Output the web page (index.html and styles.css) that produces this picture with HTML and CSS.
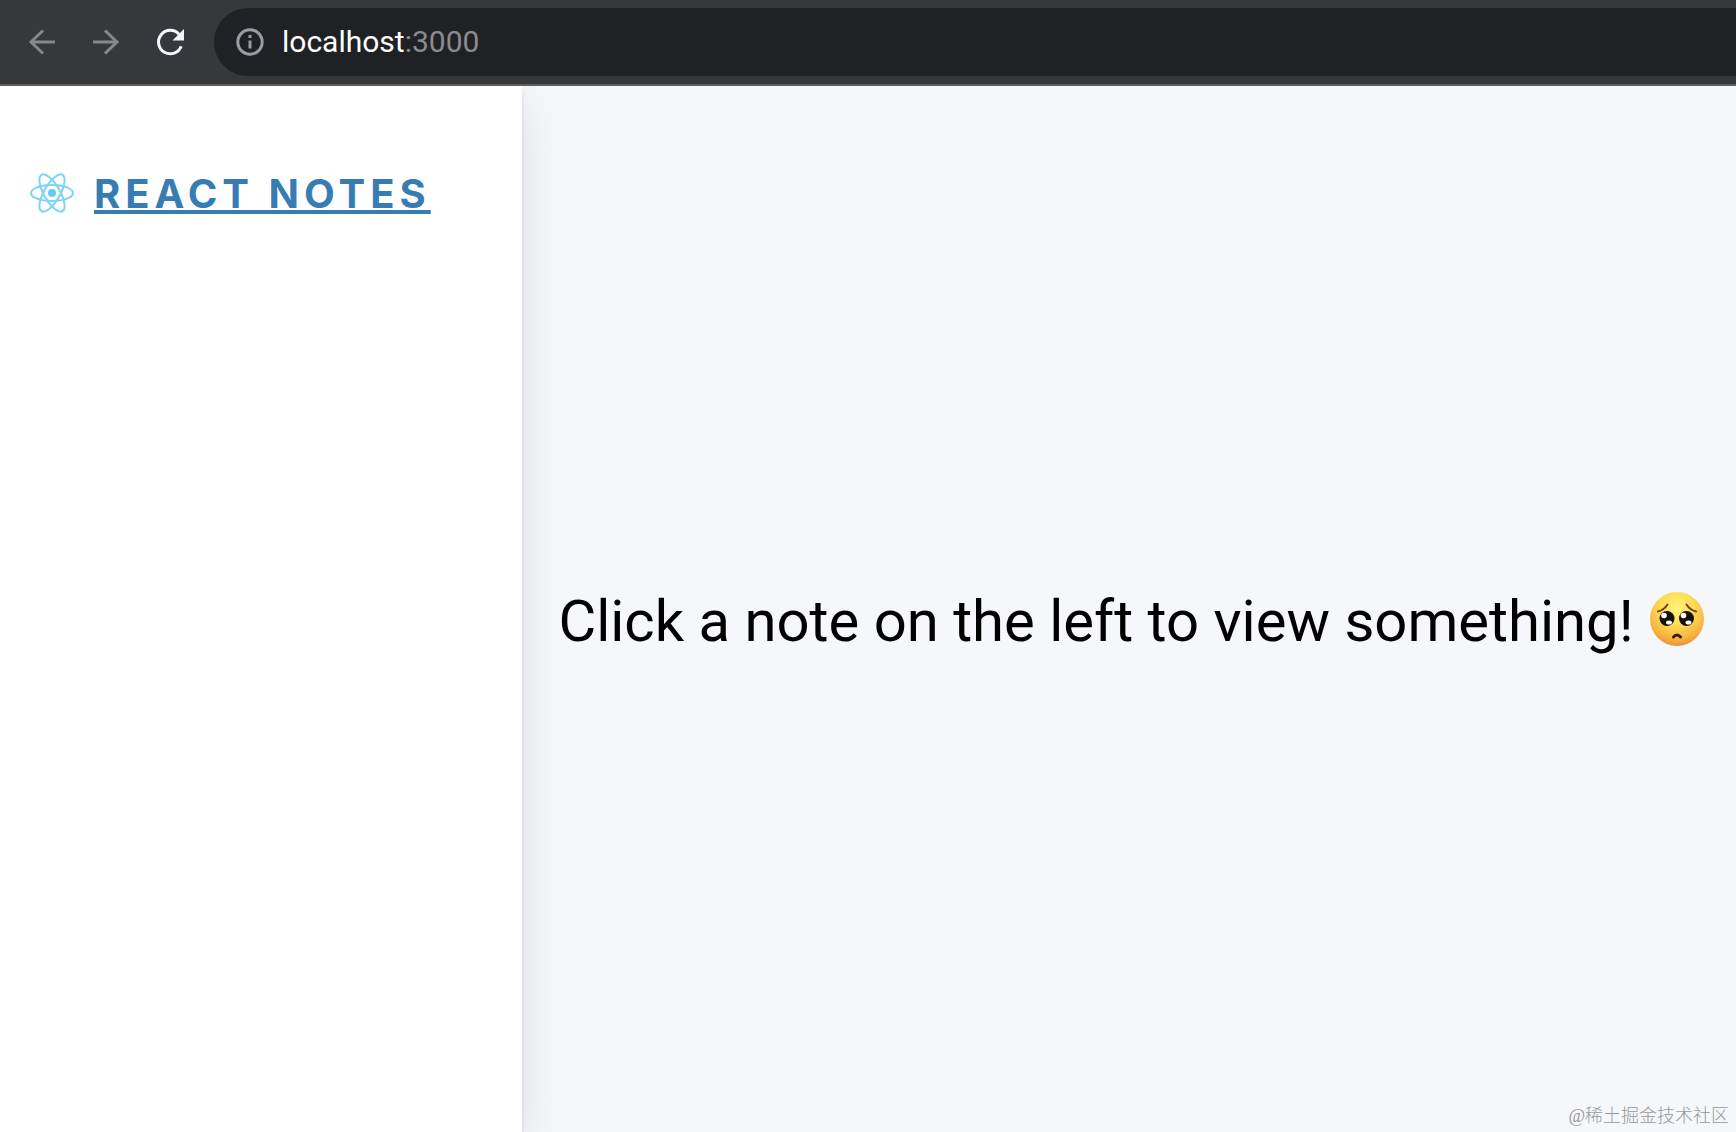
FILE: index.html
```html
<!DOCTYPE html>
<html lang="en">
<head>
<meta charset="utf-8">
<meta name="viewport" content="width=device-width, initial-scale=1">
<title>React Notes</title>
<link rel="stylesheet" href="styles.css">
</head>
<body>
<header class="toolbar">
  <nav class="nav-buttons" aria-label="Browser navigation">
    <button class="nav-button" type="button" aria-label="Back">
      <svg viewBox="0 0 32 32"><path d="M29 16H5M17 4.500L5 16l12 11.500"/></svg>
    </button>
    <button class="nav-button" type="button" aria-label="Forward">
      <svg viewBox="0 0 32 32"><path d="M3 16h24M15 4.500L27 16 15 27.500"/></svg>
    </button>
    <button class="nav-button nav-button-active" type="button" aria-label="Reload">
      <svg viewBox="0 0 32 32"><path d="M27.200 20.200A11.700 11.700 0 1 1 25 8.300"/><path class="solid" d="M30 3v11.500H18.500z"/></svg>
    </button>
  </nav>
  <div class="address">
    <svg class="info" viewBox="0 0 28 28" aria-hidden="true"><circle cx="14" cy="14" r="12.200"/><path d="M14 12.500v8M14 7v3"/></svg>
    <span class="url">localhost<span class="port">:3000</span></span>
  </div>
</header>
<div class="app">
  <aside class="sidebar">
    <svg class="logo" viewBox="0 0 44 40" aria-hidden="true">
      <circle class="core" cx="22" cy="20" r="4"/>
      <ellipse cx="22" cy="20" rx="21" ry="8"/>
      <ellipse cx="22" cy="20" rx="21" ry="8" transform="rotate(60 22 20)"/>
      <ellipse cx="22" cy="20" rx="21" ry="8" transform="rotate(120 22 20)"/>
    </svg>
    <a class="title" href="#">REACT NOTES</a>
  </aside>
  <main class="content">
    <p class="message">Click a note on the left to view something!
      <svg class="face" viewBox="0 0 54 54" role="img" aria-label="Pleading face">
        <defs>
          <radialGradient id="skin" cx="50%" cy="30%" r="70%">
            <stop offset="0" stop-color="#fff47c"/>
            <stop offset=".45" stop-color="#fddb55"/>
            <stop offset=".8" stop-color="#f6b541"/>
            <stop offset="1" stop-color="#e8943a"/>
          </radialGradient>
        </defs>
        <circle cx="27" cy="27" r="27" fill="url(#skin)"/>
        <path class="brow" d="M8 19.500q6-1.500 9.500-7M46 19.500q-6-1.500-9.500-7"/>
        <circle cx="17" cy="26.500" r="7.500" fill="#17110e"/>
        <circle cx="36.500" cy="26.500" r="7.500" fill="#17110e"/>
        <g fill="#fff">
          <circle cx="14" cy="23.500" r="2.800"/><circle cx="33.500" cy="23.500" r="2.800"/>
          <ellipse cx="19" cy="30.500" rx="3" ry="2"/><ellipse cx="38.500" cy="30.500" rx="3" ry="2"/>
        </g>
        <path class="mouth" d="M23.500 45q3.500-4 7 0"/>
      </svg>
    </p>
    <small class="credit" lang="zh-CN">@稀土掘金技术社区</small>
  </main>
</div>
</body>
</html>
```
FILE: styles.css
```css
* {
  box-sizing: border-box;
}

body {
  margin: 0;
  min-height: 100vh;
  display: flex;
  flex-direction: column;
  font-family: Inter, "Noto Sans CJK SC", sans-serif;
  color: #000;
  background: #f6f7fb;
}

svg {
  display: block;
  fill: none;
}

.toolbar {
  display: flex;
  align-items: center;
  gap: 28px;
  padding: 8px 0 8px 26px;
  background: #37383c;
  border-bottom: 2px solid #5c5c5f;
}

.nav-buttons {
  display: flex;
  gap: 32px;
}

.nav-button {
  width: 32px;
  height: 32px;
  padding: 0;
  border: 0;
  background: none;
  color: #86888b;
}

.nav-button svg {
  stroke: currentColor;
  stroke-width: 3;
}

.nav-button-active {
  color: #f4f6fb;
}

.nav-button .solid {
  fill: currentColor;
  stroke: none;
}

.address {
  flex: 1;
  display: flex;
  align-items: center;
  gap: 18px;
  height: 68px;
  padding-left: 22px;
  border-radius: 34px 0 0 34px;
  background: #202125;
}

.info {
  width: 28px;
  height: 28px;
  stroke: #9a9ca1;
  stroke-width: 3;
}

.url {
  font: 400 30px/36px Roboto, sans-serif;
  color: #fff;
}

.port {
  color: #8b8b8d;
}

.app {
  flex: 1;
  display: flex;
  overflow: hidden;
}

.sidebar {
  flex: 0 0 522px;
  display: flex;
  align-items: flex-start;
  gap: 20px;
  padding: 84px 30px;
  background: #fff;
  box-shadow: 0 16px 48px rgba(0, 0, 0, 0.1), 0 4px 4px rgba(0, 0, 0, 0.1);
}

.logo {
  width: 44px;
  height: 40px;
  margin-top: 3px;
  stroke: #7dd5f5;
  stroke-width: 2;
}

.logo .core {
  fill: #61cdf2;
  stroke: none;
}

.title {
  font-size: 40px;
  line-height: 48px;
  font-weight: 700;
  letter-spacing: 5px;
  white-space: nowrap;
  color: #377db4;
  text-decoration: underline;
  text-decoration-thickness: 4px;
  text-underline-offset: 2px;
  text-decoration-skip-ink: none;
}

.content {
  flex: 1;
  display: grid;
  grid-template-rows: 1fr auto;
  padding-top: 52px;
}

.message {
  display: flex;
  align-items: center;
  justify-content: center;
  gap: 16px;
  margin: 0;
  padding-left: 4px;
  font-family: Roboto, sans-serif;
  font-size: 58px;
  line-height: 72px;
  white-space: nowrap;
}

.face {
  width: 54px;
  height: 54px;
  margin-bottom: 4px;
}

.brow,
.mouth {
  stroke: #754013;
  stroke-width: 2;
  stroke-linecap: round;
}

.mouth {
  stroke: #3b1d0b;
  stroke-width: 3;
}

.credit {
  justify-self: end;
  padding: 0 7px 3px 0;
  font: 300 18px/26px "Liberation Serif", "Noto Sans CJK SC", serif;
  color: #96979a;
}
```
